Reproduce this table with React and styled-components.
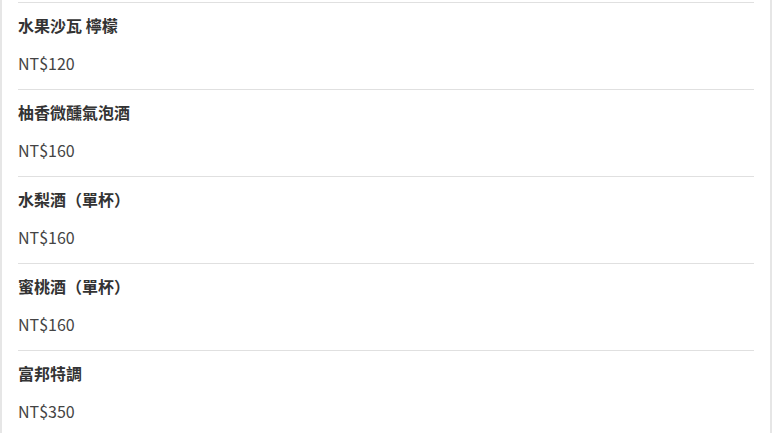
import React from 'react';
import styled, { createGlobalStyle } from 'styled-components';

const GlobalStyle = createGlobalStyle`
  body {
    margin: 0;
    background: #fff;
    font-family: "Noto Sans CJK TC", "Noto Sans", sans-serif;
  }
`;

const Frame = styled.div`
  width: 736px;
  height: 433px;
  overflow: hidden;
  border-left: 2px solid #e6e6e6;
  border-right: 2px solid #e6e6e6;
  padding: 2px 16px 0 16px;
`;

const List = styled.ul`
  list-style: none;
  margin: 0;
  padding: 0;
`;

const Item = styled.li`
  border-top: 1px solid #e0e0e0;
  padding: 11px 0 15px;
  display: flex;
  flex-direction: column;
  gap: 16px;
`;

const Name = styled.div`
  font-size: 16px;
  line-height: 22px;
  font-weight: 700;
  color: #333;
`;

const Price = styled.div`
  font-size: 16px;
  line-height: 22px;
  color: #444;
`;

const items = [
  { name: '水果沙瓦 檸檬', price: 120 },
  { name: '柚香微醺氣泡酒', price: 160 },
  { name: '水梨酒（單杯）', price: 160 },
  { name: '蜜桃酒（單杯）', price: 160 },
  { name: '富邦特調', price: 350 },
];

export default function App() {
  return (
    <>
      <GlobalStyle />
      <Frame>
        <List>
          {items.map((item) => (
            <Item key={item.name}>
              <Name>{item.name}</Name>
              <Price>NT${item.price}</Price>
            </Item>
          ))}
        </List>
      </Frame>
    </>
  );
}
